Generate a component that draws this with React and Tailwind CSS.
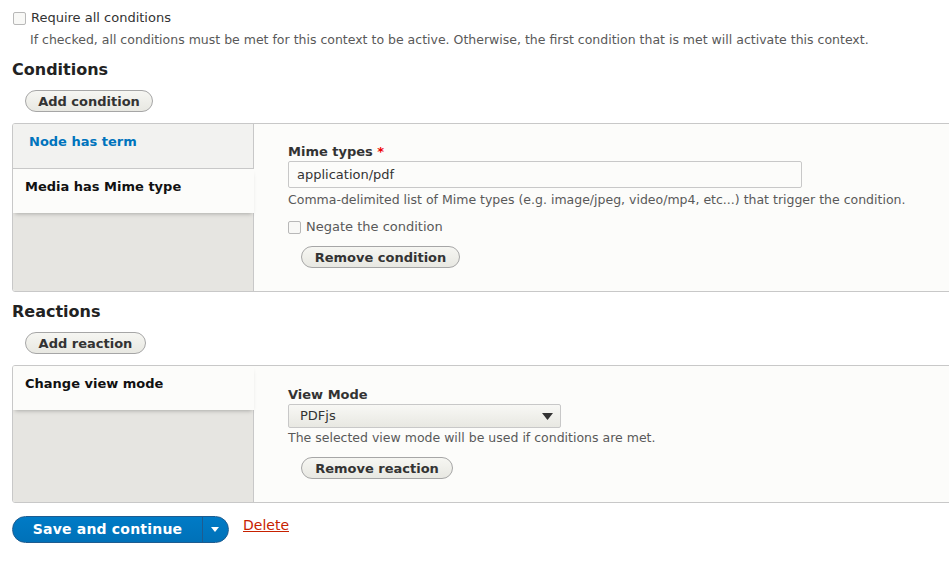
const font = { fontFamily: '"DejaVu Sans", Verdana, sans-serif' };

// Seven-style checkbox
const Checkbox = () => (
  <span className="inline-block w-[13px] h-[13px] rounded-[2px] border border-[#b8b8b8] bg-[#f8f8f6] shrink-0" />
);

const PillButton = ({ children, width }) => (
  <button
    className={`h-[22px] ${width} pt-[1px] whitespace-nowrap rounded-full border border-[#a6a6a6] bg-gradient-to-b from-[#f6f6f2] to-[#e8e8e2] text-[13px] leading-[19px] font-bold text-[#333]`}
  >
    {children}
  </button>
);

const TabItem = ({ label, active, link }) =>
  active ? (
    <div className="relative z-10 h-[44px] mr-[-1px] bg-[#fcfcfa] shadow-[0_3px_4px_-2px_rgba(0,0,0,0.25)] pl-[12px] pt-[9px] text-[13px] leading-[18px] font-bold text-[#111]">
      {label}
    </div>
  ) : (
    <div className={`h-[45px] bg-[#f2f2f0] border-b border-[#c8c8c8] pl-[16px] pt-[9px] text-[13px] leading-[18px] font-bold ${link ? 'text-[#0074bd]' : 'text-[#111]'}`}>
      {label}
    </div>
  );

const VerticalTabs = ({ tabs, height, children }) => (
  <div className={`flex w-[960px] border border-[#c8c8c8] rounded-[3px] overflow-hidden ${height}`}>
    <div className="w-[240px] shrink-0 bg-[#e6e5e1]">
      {tabs.map((t) => (
        <TabItem key={t.label} {...t} />
      ))}
    </div>
    <div className="flex-1 border-l border-[#c8c8c8] bg-[#fcfcfa] pl-[34px]">{children}</div>
  </div>
);

export default function App() {
  return (
    <div className="w-[949px] h-[561px] overflow-hidden bg-white pl-[12px] text-[#333]" style={font}>
      {/* require all */}
      <div className="mt-[8px] flex items-center h-[20px] pl-[1px]">
        <Checkbox />
        <span className="ml-[5px] text-[13px] text-[#333]">Require all conditions</span>
      </div>
      <div className="mt-[3px] ml-[18px] h-[18px] text-[12.5px] leading-[18px] text-[#595959] whitespace-nowrap">
        If checked, all conditions must be met for this context to be active. Otherwise, the first condition that is met will activate this context.
      </div>

      {/* conditions */}
      <h2 className="mt-[11px] h-[20px] text-[16px] leading-[20px] font-bold text-[#222]">Conditions</h2>
      <div className="mt-[10px] ml-[13px] flex">
        <PillButton width="w-[128px]">Add condition</PillButton>
      </div>
      <div className="mt-[11px]">
        <VerticalTabs
          height="h-[169px]"
          tabs={[
            { label: 'Node has term', link: true },
            { label: 'Media has Mime type', active: true },
          ]}
        >
          <div className="pt-[19px] h-[18px] box-content text-[13px] leading-[18px] font-bold text-[#333]">
            Mime types <span className="text-[#e00]">*</span>
          </div>
          <div className="w-[514px] h-[27px] border border-[#c8c8c8] rounded-[2px] bg-[#fcfcfa] pl-[8px] text-[13px] leading-[25px] text-[#333]">
            application/pdf
          </div>
          <div className="mt-[3px] h-[18px] text-[12.5px] leading-[18px] text-[#595959] whitespace-nowrap">
            Comma-delimited list of Mime types (e.g. image/jpeg, video/mp4, etc...) that trigger the condition.
          </div>
          <div className="mt-[9px] h-[18px] flex items-center">
            <Checkbox />
            <span className="ml-[5px] text-[13px] text-[#595959]">Negate the condition</span>
          </div>
          <div className="mt-[10px] ml-[13px] flex">
            <PillButton width="w-[159px]">Remove condition</PillButton>
          </div>
        </VerticalTabs>
      </div>

      {/* reactions */}
      <h2 className="mt-[10px] h-[20px] text-[16px] leading-[20px] font-bold text-[#222]">Reactions</h2>
      <div className="mt-[10px] ml-[13px] flex">
        <PillButton width="w-[121px]">Add reaction</PillButton>
      </div>
      <div className="mt-[11px]">
        <VerticalTabs height="h-[138px]" tabs={[{ label: 'Change view mode', active: true }]}>
          <div className="pt-[20px] h-[18px] box-content text-[13px] leading-[18px] font-bold text-[#333]">
            View Mode
          </div>
          <div className="w-[273px] h-[24px] border border-[#c8c8c8] rounded-[2px] bg-gradient-to-b from-[#f8f8f5] to-[#e8e8e2] flex items-center justify-between pl-[11px] pr-[7px] text-[13px] text-[#333]">
            <span>PDFjs</span>
            <svg width="11" height="7" viewBox="0 0 11 7">
              <path d="M0 0h11L5.5 7z" fill="#333" />
            </svg>
          </div>
          <div className="mt-[1px] h-[18px] text-[12.5px] leading-[18px] text-[#595959] whitespace-nowrap">
            The selected view mode will be used if conditions are met.
          </div>
          <div className="mt-[10px] ml-[13px] flex">
            <PillButton width="w-[152px]">Remove reaction</PillButton>
          </div>
        </VerticalTabs>
      </div>

      {/* actions */}
      <div className="mt-[13px] flex items-center">
        <div className="flex h-[27px] rounded-full border border-[#1e5c90] bg-gradient-to-b from-[#007bc6] to-[#0071b8] overflow-hidden">
          <div className="w-[189px] flex items-center justify-center text-[14px] font-bold tracking-[0.2px] text-white">
            Save and continue
          </div>
          <div className="w-[26px] border-l border-[#1e5c90] flex items-center justify-center pr-[2px]">
            <svg width="8" height="5" viewBox="0 0 8 5">
              <path d="M0 0h8L4 5z" fill="#fff" />
            </svg>
          </div>
        </div>
        <a href="#" className="ml-[14px] -mt-[8px] text-[14px] text-[#c72100] underline">
          Delete
        </a>
      </div>
    </div>
  );
}
